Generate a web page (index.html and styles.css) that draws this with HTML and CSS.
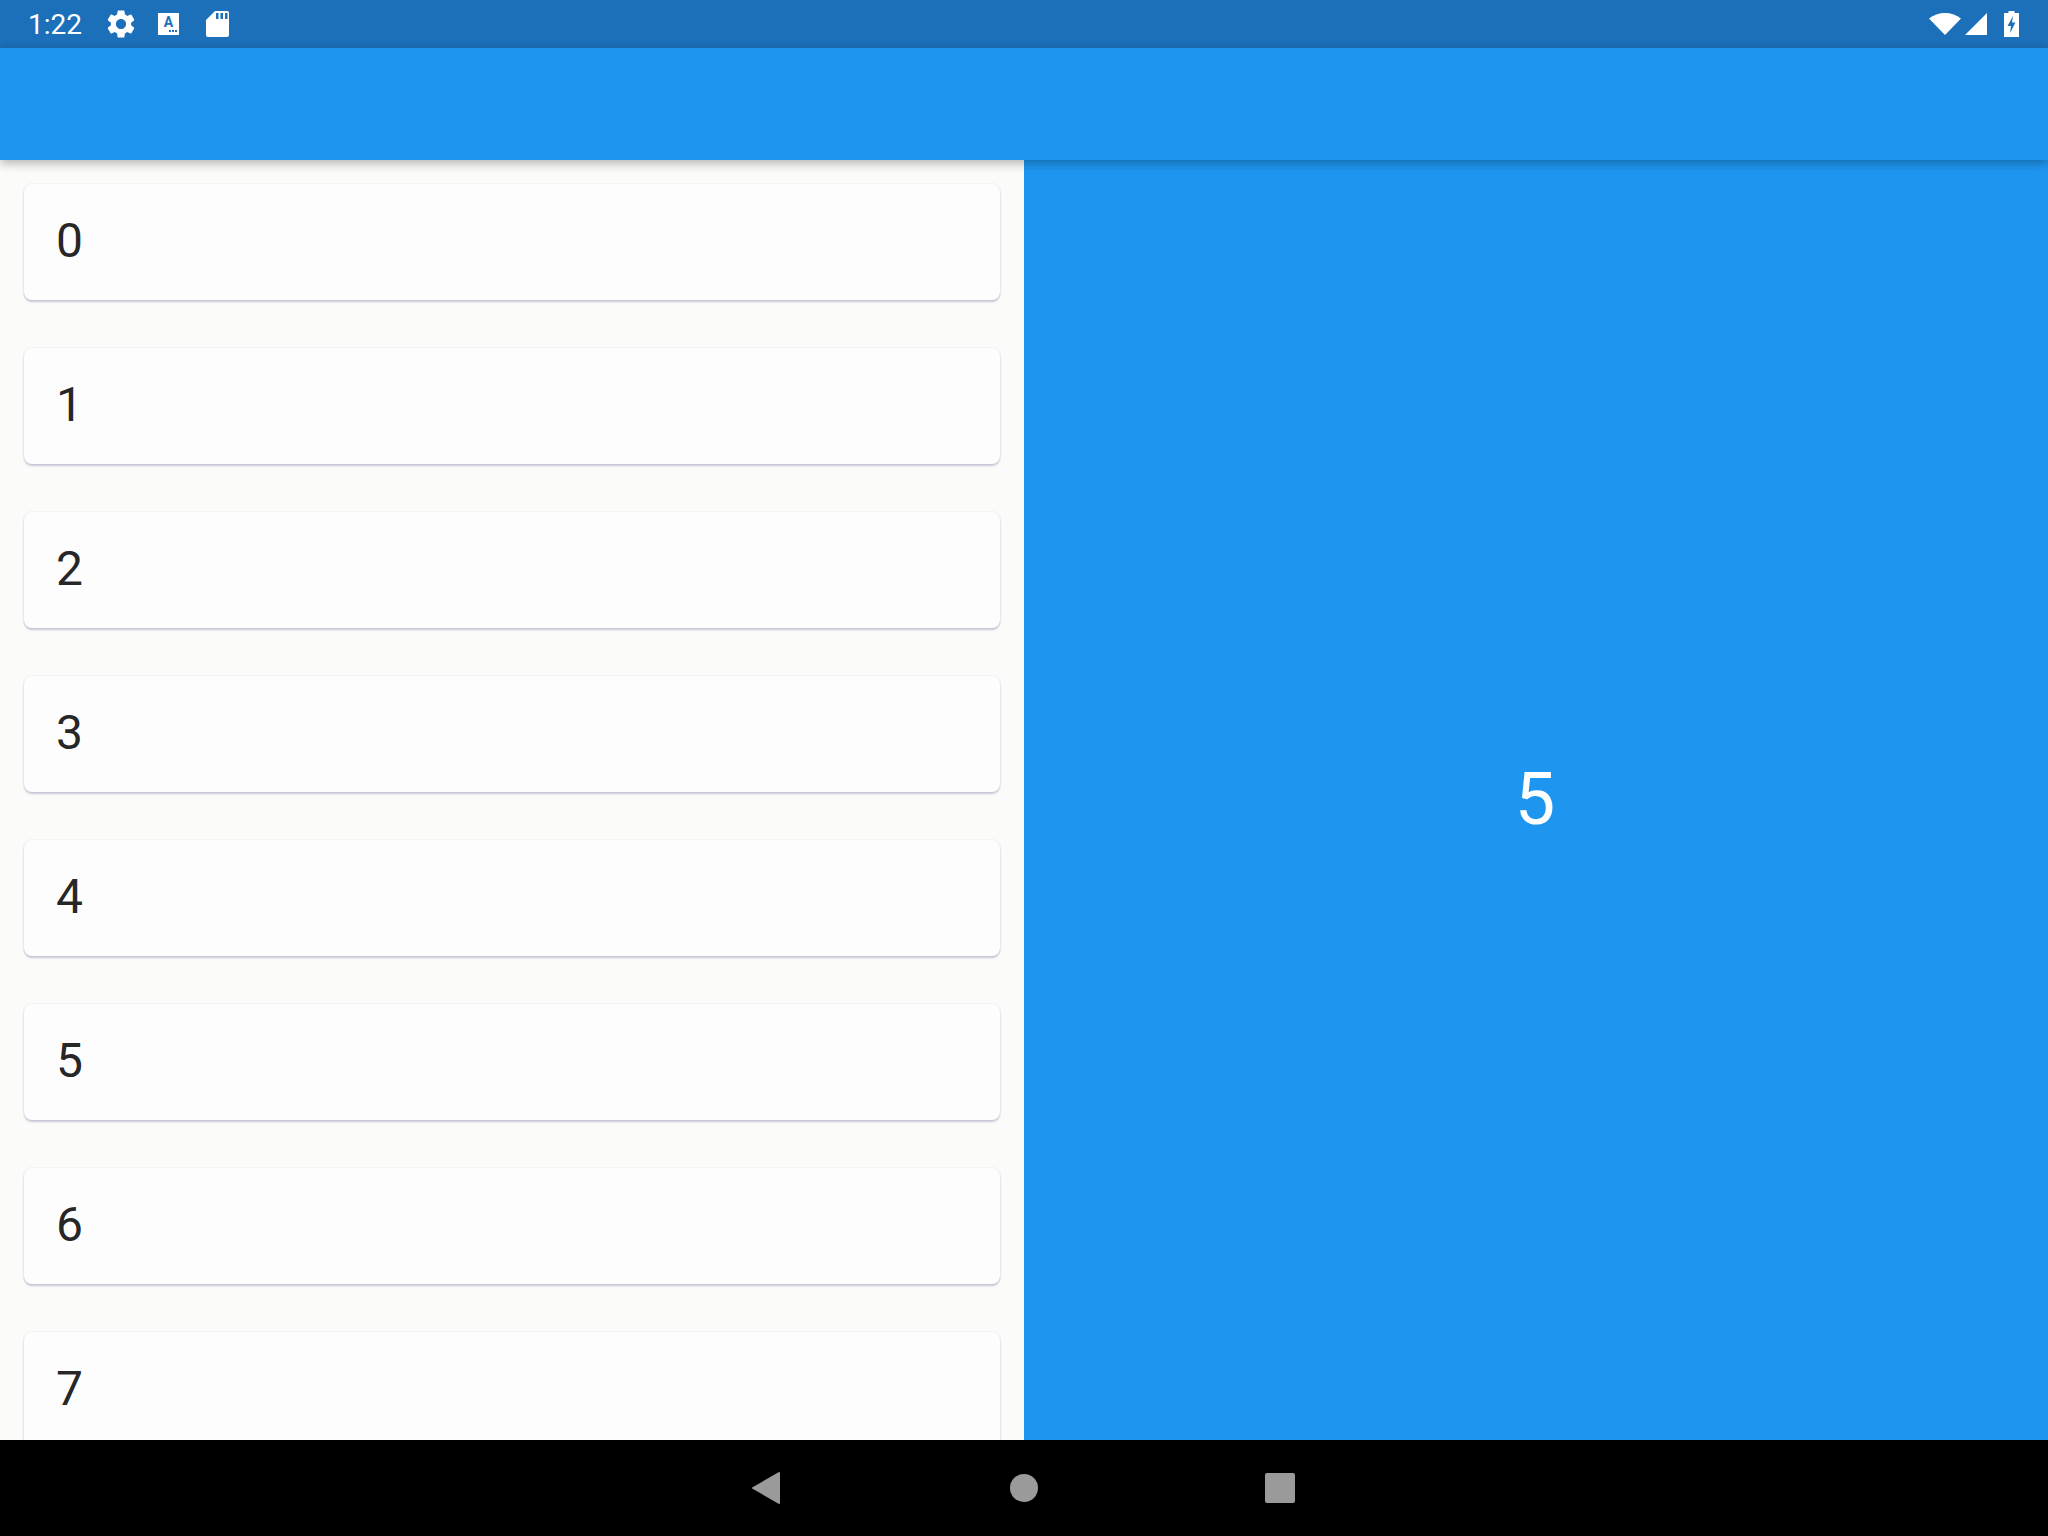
FILE: index.html
```html
<!DOCTYPE html>
<html lang="en">
<head>
  <meta charset="UTF-8">
  <meta name="viewport" content="width=device-width, initial-scale=1.0">
  <title>Master detail</title>
  <link rel="stylesheet" href="styles.css">
</head>
<body>
  <div class="screen">
    <div class="status-bar">
      <div class="status-left">
        <span class="clock">1:22</span>
        <svg class="icon-gear" viewBox="0 0 24 24"><path fill="#fff" d="M19.14 12.94c.04-.3.06-.61.06-.94 0-.32-.02-.64-.07-.94l2.03-1.58c.18-.14.23-.41.12-.61l-1.92-3.32c-.12-.22-.37-.29-.59-.22l-2.39.96c-.5-.38-1.03-.7-1.62-.94l-.36-2.54c-.04-.24-.24-.41-.48-.41h-3.84c-.24 0-.43.17-.47.41l-.36 2.54c-.59.24-1.13.57-1.62.94l-2.39-.96c-.22-.08-.47 0-.59.22L2.74 8.87c-.12.21-.08.47.12.61l2.03 1.58c-.05.3-.09.63-.09.94s.02.64.07.94l-2.03 1.58c-.18.14-.23.41-.12.61l1.92 3.32c.12.22.37.29.59.22l2.39-.96c.5.38 1.03.7 1.62.94l.36 2.54c.05.24.24.41.48.41h3.84c.24 0 .44-.17.47-.41l.36-2.54c.59-.24 1.13-.56 1.62-.94l2.39.96c.22.08.47 0 .59-.22l1.92-3.32c.12-.22.07-.47-.12-.61l-2.01-1.58zM12 15.6c-1.98 0-3.6-1.62-3.6-3.6s1.62-3.6 3.6-3.6 3.6 1.62 3.6 3.6-1.62 3.6-3.6 3.6z"/></svg>
        <div class="icon-font">
          <span class="font-letter">A</span>
          <span class="font-dots"><i></i><i></i><i></i></span>
        </div>
        <svg class="icon-sd" viewBox="0 0 23 26">
          <path fill="#fff" d="M9 0h12a2 2 0 0 1 2 2v22a2 2 0 0 1-2 2H2a2 2 0 0 1-2-2V9z"/>
          <path fill="#1b70b9" d="M10 2h2.500v6H10zM14.500 2H17v6h-2.500zM19 2h2.500v6H19z"/>
        </svg>
      </div>
      <div class="status-right">
        <svg class="icon-wifi" viewBox="0 0 32 22"><path fill="#fff" d="M0 5.500C4.500 2 10 0 16 0s11.500 2 16 5.500L16 22z"/></svg>
        <svg class="icon-signal" viewBox="0 0 22 22"><path fill="#fff" d="M22 0v22H0z"/></svg>
        <svg class="icon-battery" viewBox="0 0 15 26">
          <path fill="#fff" d="M4.500 0h6v2H15v24H0V2h4.500z"/>
          <path fill="#1b70b9" d="M9 5 3.500 15H7l-1 7 5.500-10.500H8z"/>
        </svg>
      </div>
    </div>

    <header class="app-bar"></header>

    <main class="content">
      <div class="list">
        <div class="card">0</div>
        <div class="card">1</div>
        <div class="card">2</div>
        <div class="card">3</div>
        <div class="card">4</div>
        <div class="card">5</div>
        <div class="card">6</div>
        <div class="card">7</div>
      </div>
      <div class="detail">5</div>
    </main>

    <nav class="nav-bar">
      <div class="nav-item"><svg class="nav-back" viewBox="0 0 28 32"><path fill="#9a9a9a" d="M27 0a1 1 0 0 1 1 1v30a1 1 0 0 1-1 1L1 17a1 1 0 0 1 0-2z"/></svg></div>
      <div class="nav-item"><span class="nav-home"></span></div>
      <div class="nav-item"><span class="nav-recent"></span></div>
    </nav>
  </div>
</body>
</html>
```

FILE: styles.css
```css
* {
  margin: 0;
  padding: 0;
  box-sizing: border-box;
}

body {
  background-color: #000;
  font-family: Roboto, "Liberation Sans", sans-serif;
}

.screen {
  width: 2048px;
  height: 1536px;
  display: flex;
  flex-direction: column;
  overflow: hidden;
}

.status-bar {
  height: 48px;
  flex-shrink: 0;
  background-color: #1b70b9;
  color: #fff;
  display: flex;
  justify-content: space-between;
  align-items: center;
  padding: 0 29px 0 28px;
}

.status-left,
.status-right {
  display: flex;
  align-items: center;
}

.clock {
  font-size: 28px;
  width: 76px;
}

.icon-gear {
  width: 34px;
  height: 34px;
  margin-right: 20px;
}

.icon-font {
  width: 21px;
  height: 22px;
  background-color: #fff;
  color: #1b70b9;
  margin-right: 27px;
  display: flex;
  flex-direction: column;
  align-items: center;
  line-height: 1;
}

.font-letter {
  font-size: 14px;
  font-weight: 700;
  margin-top: 2px;
}

.font-dots {
  display: flex;
  gap: 1px;
  align-self: flex-end;
  margin: 1px 2px 0 0;
}

.font-dots i {
  width: 2px;
  height: 2px;
  background-color: #1b70b9;
}

.icon-sd {
  width: 23px;
  height: 26px;
}

.icon-wifi {
  width: 32px;
  height: 22px;
  margin-right: 4px;
}

.icon-signal {
  width: 22px;
  height: 22px;
  margin-right: 17px;
}

.icon-battery {
  width: 15px;
  height: 26px;
}

.app-bar {
  height: 112px;
  flex-shrink: 0;
  background-color: #1e96f0;
  box-shadow: 0 3px 10px rgba(0, 0, 0, 0.3);
  position: relative;
  z-index: 2;
}

.content {
  flex: 1;
  display: flex;
  min-height: 0;
}

.list {
  width: 1024px;
  background-color: #fbfbfa;
  padding: 24px 24px 0;
  display: flex;
  flex-direction: column;
  gap: 48px;
  overflow: hidden;
}

.card {
  height: 116px;
  flex-shrink: 0;
  background-color: #fdfdfd;
  border-radius: 8px;
  box-shadow: 0 2px 2px rgba(60, 60, 120, 0.25), 0 0 2px rgba(60, 60, 120, 0.14);
  padding: 0 0 3px 32px;
  display: flex;
  align-items: center;
  font-size: 48px;
  color: rgba(0, 0, 0, 0.87);
}

.detail {
  flex: 1;
  background-color: #1e96f0;
  color: #fff;
  font-size: 72px;
  padding: 0 2px 2px 0;
  display: flex;
  justify-content: center;
  align-items: center;
}

.nav-bar {
  height: 96px;
  flex-shrink: 0;
  background-color: #000;
  display: flex;
  justify-content: center;
  align-items: center;
}

.nav-item {
  width: 256px;
  display: flex;
  justify-content: center;
  align-items: center;
}

.nav-back {
  width: 28px;
  height: 32px;
  margin-right: 4px;
}

.nav-home {
  width: 28px;
  height: 28px;
  border-radius: 50%;
  background-color: #9a9a9a;
}

.nav-recent {
  width: 30px;
  height: 30px;
  border-radius: 2px;
  background-color: #9a9a9a;
}
```
